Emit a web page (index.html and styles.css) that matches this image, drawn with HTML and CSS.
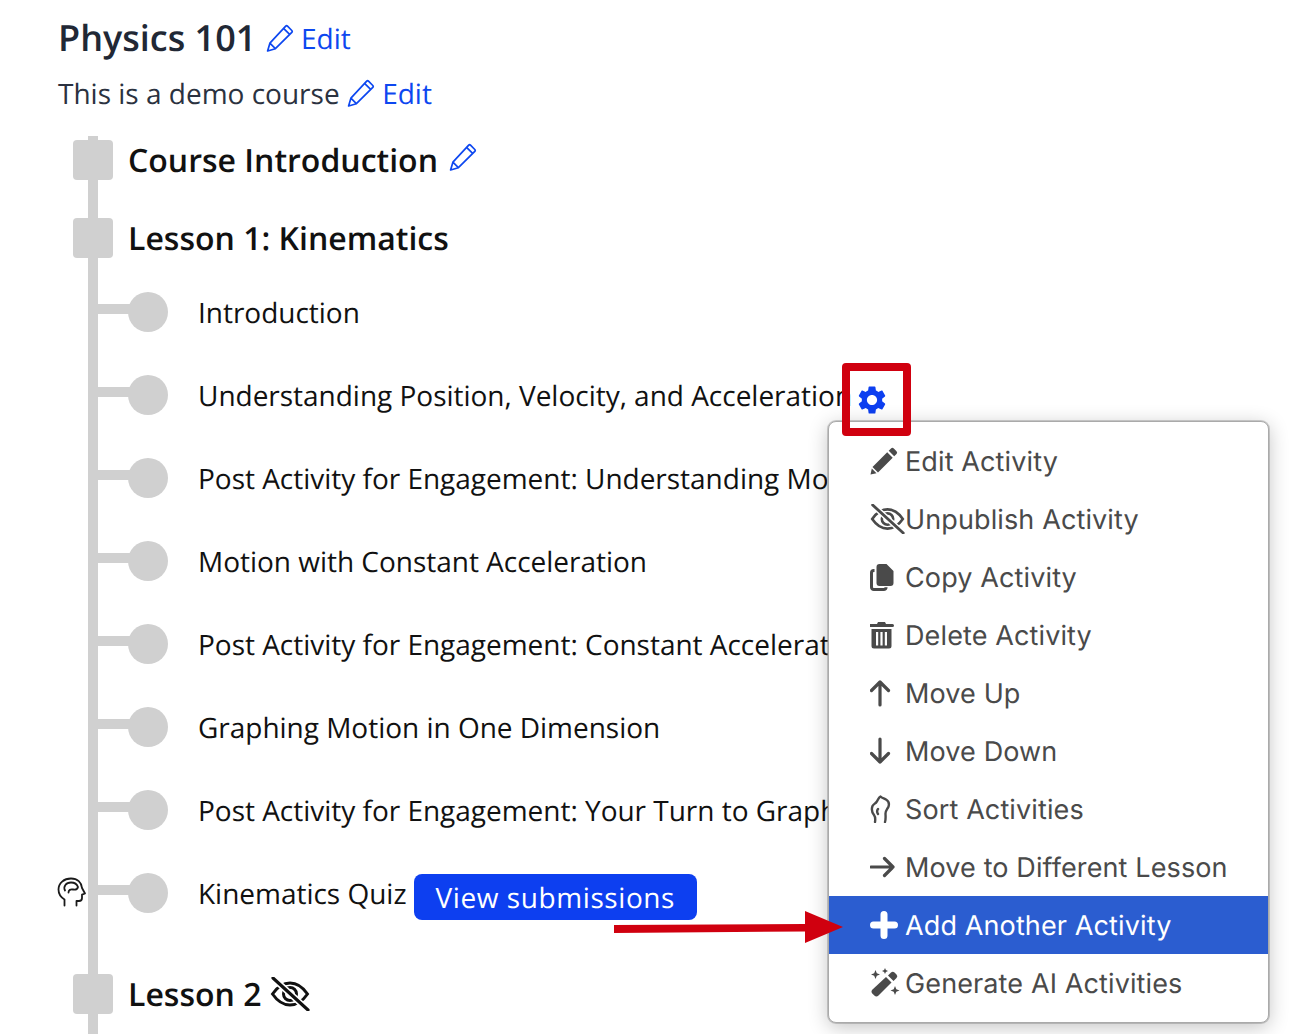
FILE: index.html
```html
<!DOCTYPE html>
<html lang="en">
<head>
<meta charset="utf-8" />
<title>Physics 101</title>
<link rel="stylesheet" href="styles.css">
</head>
<body>
<svg class="defs" width="0" height="0">
	<symbol id="pencil" viewBox="0 0 28 28"><path d="M21.500 2.200 25.800 6.500a1.300 1.300 0 0 1 0 1.800L9.400 24.700 1.600 27 3.900 19.200 19.700 2.200a1.300 1.300 0 0 1 1.800 0ZM17.800 4.600 23.400 10.200M3.900 19.200 9.400 24.700" fill="none" stroke="currentColor" stroke-width="1.700" stroke-linejoin="round"/></symbol>
	<symbol id="eyeoff" viewBox="0 0 40 34"><path d="M2.500 17C8 9 14 6 20 6s12 3 17.500 11C32 25 26 28 20 28S8 25 2.500 17Z M20 10.500a6.500 6.500 0 1 0 0 13 6.500 6.500 0 0 0 0-13Z" fill="none" stroke="currentColor" stroke-width="3"/><path d="M3 1 38 33" stroke="#fff" stroke-width="6.500"/><path d="M3 1 38 33" stroke="currentColor" stroke-width="3.200" stroke-linecap="round"/></symbol>
</svg>
<div class="page">
	<h1 class="title">Physics 101 <a class="edit"><svg class="ico-pencil"><use href="#pencil"/></svg> Edit</a></h1>
	<p class="desc">This is a demo course <a class="edit"><svg class="ico-pencil"><use href="#pencil"/></svg> Edit</a></p>

	<div class="outline">
		<div class="section first"><span class="square"></span><h2>Course Introduction</h2><svg class="ico-pencil small"><use href="#pencil"/></svg></div>
		<div class="section"><span class="square"></span><h2>Lesson 1: Kinematics</h2></div>
		<div class="activities">
			<div class="activity"><span class="dot"></span><span class="label">Introduction</span></div>
			<div class="activity"><span class="dot"></span><span class="label">Understanding Position, Velocity, and Acceleration</span>
				<svg class="gear" viewBox="0 0 24 24"><path d="M19.140 12.940c.04-.3.06-.61.06-.94 0-.32-.02-.64-.07-.94l2.030-1.580c.18-.14.23-.41.12-.61l-1.920-3.320c-.12-.22-.37-.29-.59-.22l-2.390.96c-.5-.38-1.030-.7-1.620-.94l-.36-2.540c-.04-.24-.24-.41-.48-.41h-3.840c-.24 0-.43.17-.47.41l-.36 2.540c-.59.24-1.130.57-1.620.94l-2.390-.96c-.22-.08-.47 0-.59.22L2.740 8.870c-.12.21-.08.47.12.61l2.030 1.580c-.05.3-.09.63-.09.94s.02.64.07.94l-2.030 1.580c-.18.14-.23.41-.12.61l1.920 3.320c.12.22.37.29.59.22l2.390-.96c.5.38 1.030.7 1.620.94l.36 2.540c.05.24.24.41.48.41h3.840c.24 0 .44-.17.47-.41l.36-2.540c.59-.24 1.130-.56 1.620-.94l2.390.96c.22.08.47 0 .59-.22l1.920-3.320c.12-.22.07-.47-.12-.61l-2.010-1.580zM12 15.600c-1.980 0-3.600-1.620-3.600-3.600s1.620-3.600 3.600-3.600 3.600 1.620 3.600 3.600-1.620 3.600-3.600 3.600z"/></svg>
			</div>
			<div class="activity"><span class="dot"></span><span class="label">Post Activity for Engagement: Understanding Motion</span></div>
			<div class="activity"><span class="dot"></span><span class="label">Motion with Constant Acceleration</span></div>
			<div class="activity"><span class="dot"></span><span class="label">Post Activity for Engagement: Constant Acceleration</span></div>
			<div class="activity"><span class="dot"></span><span class="label">Graphing Motion in One Dimension</span></div>
			<div class="activity"><span class="dot"></span><span class="label">Post Activity for Engagement: Your Turn to Graph</span></div>
			<div class="activity quiz">
				<svg class="brain" viewBox="0 0 30 30"><path d="M7.500 28.500V22.500C3.500 20 1.500 16.500 1.500 12.500 1.500 6 7 1.500 14 1.500c6.500 0 10.500 4 11 9.500l3 5.500-3 1.200v3.300c0 1.800-1.200 3-3 3h-2.500v4.500M8 13.500C6 9.500 9 5.500 14 5.500c3.500 0 6 1.500 7 4.500-.5 2-2.500 3-5 2.500-2.500-.5-4.500.5-4.500 3" fill="none" stroke="#1a1a1a" stroke-width="1.800" stroke-linecap="round" stroke-linejoin="round"/></svg>
				<span class="dot"></span><span class="label">Kinematics Quiz</span><a class="btn">View submissions</a>
			</div>
		</div>
		<div class="section last"><span class="square"></span><h2>Lesson 2</h2><svg class="ico-eye"><use href="#eyeoff"/></svg></div>
	</div>
</div>

<ul class="menu">
	<li><svg class="mi" viewBox="0 0 28 28"><path d="M21 1.500a2 2 0 0 1 2.800 0l2.700 2.700a2 2 0 0 1 0 2.800l-2.300 2.300-5.500-5.500ZM17.200 5.300l5.500 5.500L8 25.500 2.500 20ZM1.800 21.500l4.700 4.700L.5 27.500Z"/></svg>Edit Activity</li>
	<li><svg class="mi eye"><use href="#eyeoff"/></svg>Unpublish Activity</li>
	<li><svg class="mi" viewBox="0 0 28 28"><path d="M9.500 1h7l7 7v12a3 3 0 0 1-3 3h-11a3 3 0 0 1-3-3V4a3 3 0 0 1 3-3Z"/><path d="M4.500 7.500H3.800A2.300 2.300 0 0 0 1.500 9.800v14.400a2.300 2.300 0 0 0 2.300 2.300h10a2.300 2.300 0 0 0 2.300-2.300" fill="none" stroke="currentColor" stroke-width="3"/></svg>Copy Activity</li>
	<li><svg class="mi" viewBox="0 0 28 28"><path fill-rule="evenodd" d="M8 1h7l1 2h6.500a1 1 0 0 1 0 3H.5a1 1 0 0 1 0-3H7ZM1.500 8h20v17a2.500 2.500 0 0 1-2.500 2.500H4A2.500 2.500 0 0 1 1.500 25ZM6 11v13.500h2.200V11Zm4.400 0v13.500h2.200V11Zm4.400 0v13.500H17V11Z"/></svg>Delete Activity</li>
	<li><svg class="mi" viewBox="0 0 28 28"><path d="M10 26V3M1.500 11.500 10 3l8.500 8.500" fill="none" stroke="currentColor" stroke-width="3.200" stroke-linecap="round" stroke-linejoin="round"/></svg>Move Up</li>
	<li><svg class="mi" viewBox="0 0 28 28"><path d="M10 2v23M1.500 16.500 10 25l8.500-8.500" fill="none" stroke="currentColor" stroke-width="3.200" stroke-linecap="round" stroke-linejoin="round"/></svg>Move Down</li>
	<li><svg class="mi" viewBox="0 0 28 28"><path d="M5 27c.5-3 .5-5-1-7-2-2.500-3-5-1.500-9 1-2 3-2.500 4-4 1.500-2 2-4.500 4-5.500 1.500 1.500 3.500 2 5.500 3 2.500 1.500 3.500 4 2.500 7-1 2.500-3 4-3 7 0 2.500.5 5-.5 8.500M8 19c-1-1.500-1.500-3 0-5" fill="none" stroke="currentColor" stroke-width="2.400" stroke-linecap="round" stroke-linejoin="round"/></svg>Sort Activities</li>
	<li><svg class="mi" viewBox="0 0 28 28"><path d="M1 14h22M14.500 5.500 23 14l-8.500 8.500" fill="none" stroke="currentColor" stroke-width="3.200" stroke-linecap="round" stroke-linejoin="round"/></svg>Move to Different Lesson</li>
	<li class="active"><svg class="mi" viewBox="0 0 28 28"><path d="M14 3.500v21M3.500 14h21" fill="none" stroke="currentColor" stroke-width="7" stroke-linecap="round"/></svg>Add Another Activity</li>
	<li><svg class="mi wand" viewBox="0 0 30 30"><path d="M16 9 21.500 14.500 8.500 27.500a3 3 0 0 1-4.200 0l-1.800-1.800a3 3 0 0 1 0-4.200Z"/><path d="M21 4.500a2.500 2.500 0 0 1 3.500 0l2 2a2.500 2.500 0 0 1 0 3.500l-3 3-5.500-5.500ZM5.500 2l1.300 3.200L10 6.500 6.800 7.800 5.500 11 4.200 7.800 1 6.500l3.200-1.300ZM15 0l.9 2.100 2.100.9-2.100.9-.9 2.100-.9-2.100-2.100-.9 2.100-.9ZM25 18l1.300 3.200 3.200 1.300-3.200 1.300L25 27l-1.300-3.200-3.200-1.300 3.200-1.300Z"/></svg>Generate AI Activities</li>
</ul>

<div class="callout-box"></div>
<svg class="callout-arrow" width="232" height="34" viewBox="0 0 232 34"><path d="M0 14 191 13V0l38 16-38 16V20.500L0 22Z" fill="#d0000f"/></svg>
</body>
</html>
```

FILE: styles.css
```css
html, body {
	margin: 0;
	height: 1034px;
	overflow: hidden;
	background: #fff;
}
body {
	position: relative;
	font-family: "Open Sans", sans-serif;
	color: #111;
	text-rendering: geometricPrecision;
}
.defs {
	position: absolute;
}
.page {
	padding: 13px 0 0 58px;
}
.title {
	margin: 0;
	height: 50px;
	font-size: 36px;
	line-height: 50px;
	font-weight: 600;
	color: #212835;
	white-space: nowrap;
}
.title .edit {
	vertical-align: 2px;
}
.desc {
	margin: 6px 0 0;
	height: 50px;
	font-size: 28px;
	line-height: 50px;
	color: #2b3240;
	white-space: nowrap;
}
.edit {
	color: #0d47f0;
	font-size: 28px;
	font-weight: 400;
}
.ico-pencil {
	width: 28px;
	height: 28px;
	color: #0d47f0;
	vertical-align: -3px;
}
.ico-pencil.small {
	margin: -6px 0 0 -4px;
}
.outline {
	position: relative;
	margin: 17px 0 0 15px;
}
.outline::before {
	content: "";
	position: absolute;
	left: 15px;
	top: 0;
	width: 10px;
	height: 900px;
	background: #d0d0d0;
}
.section {
	position: relative;
	display: flex;
	align-items: center;
	height: 40px;
	margin-top: 38px;
	gap: 15px;
}
.section.first {
	margin-top: 4px;
	padding-top: 4px;
}
.section.last {
	margin-top: 40px;
}
.square {
	width: 40px;
	height: 40px;
	border-radius: 4px;
	background: #d0d0d0;
}
h2 {
	margin: 0;
	font-size: 32px;
	font-weight: 600;
	color: #111;
	white-space: nowrap;
}
.ico-eye {
	width: 40px;
	height: 34px;
	margin-left: -6px;
	color: #111;
}
.activities {
	padding: 12px 0 0 55px;
}
.activity {
	position: relative;
	display: flex;
	align-items: center;
	height: 83px;
	font-size: 28px;
	white-space: nowrap;
}
.label {
	padding-top: 2px;
	letter-spacing: -.02px;
}
.dot {
	position: relative;
	flex: none;
	width: 40px;
	height: 40px;
	margin-right: 30px;
	border-radius: 50%;
	background: #d0d0d0;
}
.dot::before {
	content: "";
	position: absolute;
	left: -30px;
	top: 12px;
	width: 32px;
	height: 10px;
	background: #d0d0d0;
}
.gear {
	width: 34px;
	height: 34px;
	margin: 10px 0 0 3px;
	fill: #0d3ff0;
}
.brain {
	position: absolute;
	left: -71px;
	top: 26px;
	width: 30px;
	height: 30px;
}
.btn {
	margin: 8px 0 0 7px;
	padding: 0 22px;
	height: 46px;
	line-height: 48px;
	border-radius: 8px;
	background: #0d3ff0;
	color: #fff;
	letter-spacing: .58px;
}
.menu {
	position: absolute;
	left: 828px;
	top: 421px;
	box-sizing: border-box;
	width: 441px;
	height: 602px;
	margin: 0;
	padding: 10px 0 0;
	list-style: none;
	background: #fff;
	border: 1px solid #aaa;
	border-radius: 8px;
	box-shadow: 0 4px 20px rgba(0,0,0,.24), 0 0 0 1px rgba(170,170,170,.5);
	font-family: Inter, sans-serif;
	font-size: 27px;
	letter-spacing: .12px;
	color: #4a4a4a;
}
.menu li {
	display: flex;
	align-items: center;
	height: 58px;
	padding-left: 41px;
	white-space: nowrap;
}
.menu li.active {
	background: #2b5dd0;
	color: #fff;
}
.mi {
	flex: none;
	width: 28px;
	height: 28px;
	margin-right: 7px;
	fill: currentColor;
	color: inherit;
}
.mi.eye {
	width: 35px;
	height: 30px;
	margin-right: 0;
}
.mi.wand {
	width: 30px;
	height: 30px;
	margin-right: 5px;
}
.callout-box {
	position: absolute;
	left: 842px;
	top: 363px;
	box-sizing: border-box;
	width: 69px;
	height: 73px;
	border: 8px solid #d0000f;
	border-radius: 4px;
}
.callout-arrow {
	position: absolute;
	left: 614px;
	top: 911px;
}
```
